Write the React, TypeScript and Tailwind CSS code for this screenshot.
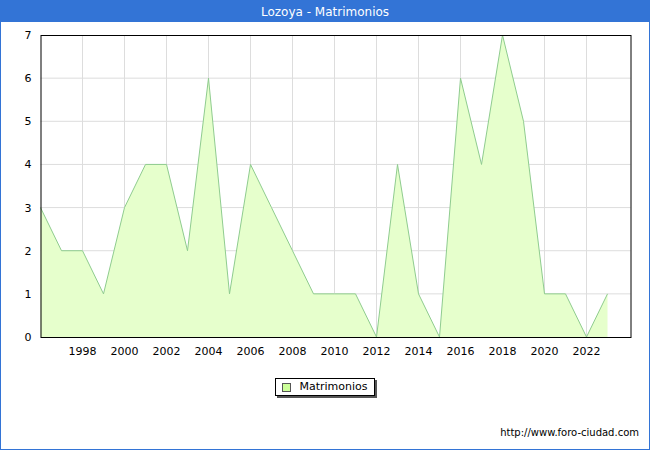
import React from 'react';

const data = [3, 2, 2, 1, 3, 4, 4, 2, 6, 1, 4, 3, 2, 1, 1, 1, 0, 4, 1, 0, 6, 4, 7, 5, 1, 1, 0, 1];
const X0 = 40, DX = 21, Y0 = 337, DY = 43.14;
const px = (i: number) => X0 + i * DX;
const py = (v: number) => Y0 - v * DY;

const Chart: React.FC = () => {
  const line = data.map((v, i) => `${px(i)},${py(v)}`).join(' ');
  const area = `${px(0)},${Y0} ${line} ${px(data.length - 1)},${Y0}`;
  return (
    <svg width="648" height="350" className="block" style={{ fontFamily: '"DejaVu Sans", sans-serif' }}>
      <g transform="translate(-0.5,-22)">
        {[1, 2, 3, 4, 5, 6].map((v) => (
          <line key={v} x1={40} x2={630} y1={py(v)} y2={py(v)} stroke="#dddddd" />
        ))}
        {Array.from({ length: 13 }, (_, k) => 82 + k * 42).map((x) => (
          <line key={x} x1={x} x2={x} y1={35} y2={337} stroke="#dddddd" />
        ))}
        <polygon points={area} fill="#e6ffcc" />
        <polyline points={line} fill="none" stroke="#8fcc8f" strokeWidth="1" />
        <rect x={40.5} y={35.5} width={590} height={302} fill="none" stroke="#000" />
        {[0, 1, 2, 3, 4, 5, 6, 7].map((v) => (
          <text key={v} x={31} y={py(v) + 4} fontSize="11" textAnchor="end" fill="#000">{v}</text>
        ))}
        {Array.from({ length: 13 }, (_, k) => 1998 + k * 2).map((y, k) => (
          <text key={y} x={82 + k * 42} y={355} fontSize="11" textAnchor="middle" fill="#000">{y}</text>
        ))}
      </g>
    </svg>
  );
};

export default function App() {
  return (
    <div className="w-[650px] h-[450px] border border-[#3374d6] bg-white flex flex-col" style={{ fontFamily: '"DejaVu Sans", sans-serif' }}>
      <div className="h-[21px] bg-[#3374d6] text-white text-[12px] flex items-center justify-center shrink-0">Lozoya - Matrimonios</div>
      <Chart />
      <div className="flex justify-center mt-[6px]">
        <div className="border border-black bg-white shadow-[2px_2px_0_#555] h-[18px] px-[6px] flex items-center gap-[8px] text-[11px]">
          <span className="w-[9px] h-[9px] border border-[#555] bg-[#ccff99]" />
          Matrimonios
        </div>
      </div>
      <div className="mt-auto mb-[9px] mr-[10px] text-right text-[10px]">http://www.foro-ciudad.com</div>
    </div>
  );
}
